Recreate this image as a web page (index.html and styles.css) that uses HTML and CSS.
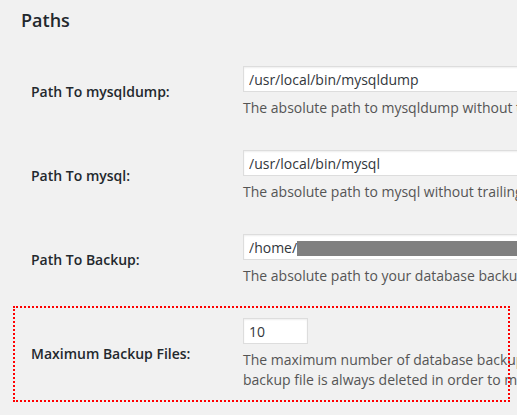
FILE: index.html
```html
<!DOCTYPE html>
<html>
<head>
<meta charset="utf-8">
<link rel="stylesheet" href="styles.css">
</head>
<body>
<div class="wrap">
  <h2 class="title">Paths</h2>
  <div class="rows">
    <div class="row">
      <div class="label">Path To mysqldump:</div>
      <div class="field">
        <input class="text" type="text" value="/usr/local/bin/mysqldump">
        <p class="desc">The absolute path to mysqldump without trailing slash.</p>
      </div>
    </div>
    <div class="row">
      <div class="label">Path To mysql:</div>
      <div class="field">
        <input class="text" type="text" value="/usr/local/bin/mysql">
        <p class="desc">The absolute path to mysql without trailing slash.</p>
      </div>
    </div>
    <div class="row">
      <div class="label">Path To Backup:</div>
      <div class="field">
        <div class="redact-wrap">
          <input class="text" type="text" value="/home/">
          <span class="redact"></span>
        </div>
        <p class="desc">The absolute path to your database backup folder.</p>
      </div>
    </div>
    <div class="row highlight">
      <div class="label">Maximum Backup Files:</div>
      <div class="field">
        <input class="text small" type="text" value="10">
        <p class="desc">The maximum number of database backup files to keep. The oldest backup file is always deleted in order to maintain this number.</p>
      </div>
    </div>
  </div>
</div>
</body>
</html>
```

FILE: styles.css
```css
html, body {
  margin: 0;
  padding: 0;
  overflow: hidden;
  background: #f1f1f1;
}
body {
  width: 517px;
  height: 415px;
  font-family: "Open Sans", "Noto Sans", sans-serif;
  color: #23282d;
}
.wrap {
  width: 900px;
}
.title {
  margin: 9px 0 0 21px;
  font-size: 18px;
  line-height: 23px;
  font-weight: 600;
  color: #23282d;
}
.rows {
  margin-top: 18px;
}
.row {
  display: flex;
  align-items: center;
  padding: 16px 0;
}
.label {
  width: 212px;
  padding-left: 31px;
  font-size: 14px;
  line-height: 20px;
  font-weight: 600;
  color: #23282d;
  flex: none;
}
.field {
  flex: none;
  width: 600px;
}
.text {
  display: block;
  box-sizing: border-box;
  width: 350px;
  height: 26px;
  margin: 0;
  padding: 0 5px;
  border: 1px solid #ddd;
  background: #fff;
  box-shadow: inset 0 1px 2px rgba(0, 0, 0, 0.07);
  font-family: "Open Sans", "Noto Sans", sans-serif;
  font-size: 14px;
  color: #32373c;
  outline: none;
}
.text.small {
  width: 65px;
}
.redact-wrap {
  position: relative;
}
.redact {
  position: absolute;
  left: 54px;
  top: 7px;
  width: 300px;
  height: 15px;
  background: #808080;
}
.desc {
  margin: 6px 0 0;
  width: 480px;
  font-size: 14px;
  line-height: 20px;
  color: #555;
}
.highlight {
  position: relative;
}
.highlight::after {
  content: "";
  position: absolute;
  left: 13px;
  top: 4px;
  width: 497px;
  bottom: 4px;
  box-sizing: border-box;
  border: 2px dotted #f00;
}
```
